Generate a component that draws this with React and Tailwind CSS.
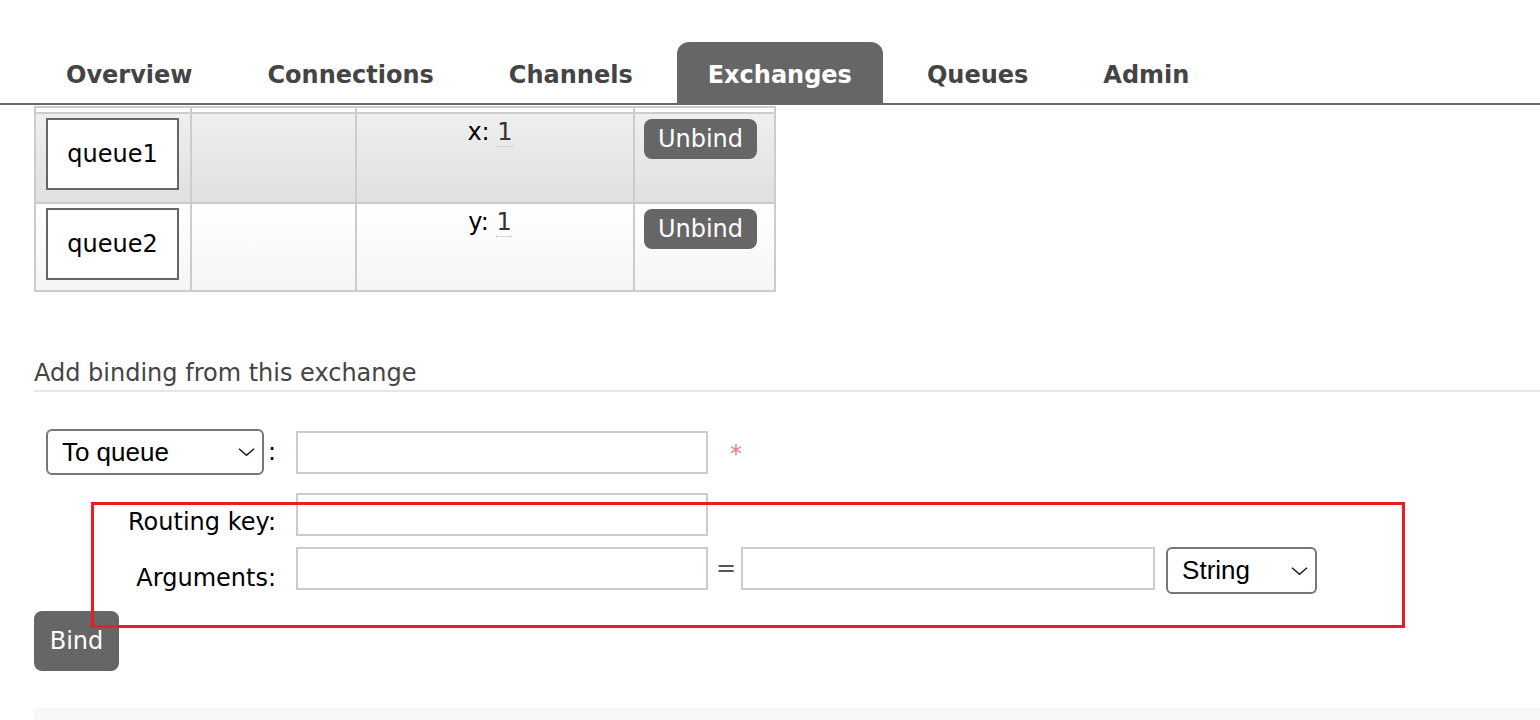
import { useState } from "react";

const tabs = ["Overview", "Connections", "Channels", "Exchanges", "Queues", "Admin"];

const bindings = [
  { queue: "queue1", key: "x", value: "1", bg: "bg-linear-to-b from-[#efefef] to-[#e0e0e0]", h: "h-[90px]" },
  { queue: "queue2", key: "y", value: "1", bg: "bg-linear-to-b from-white to-[#f5f5f5]", h: "h-[88px]" },
];

const Chevron = () => (
  <svg
    className="pointer-events-none absolute right-[9px] top-1/2 -translate-y-1/2"
    width="17"
    height="9"
    viewBox="0 0 17 9"
  >
    <path d="M1 1.2l7.5 6.6L16 1.2" fill="none" stroke="#1a1a1a" strokeWidth="1.5" />
  </svg>
);

const Select = ({ value, options, className }) => (
  <div className={`relative ${className}`}>
    <select
      defaultValue={value}
      className="h-full w-full appearance-none rounded-[6px] border-2 border-[#777] bg-white pl-[14px] font-['Liberation_Sans',Arial,sans-serif] text-[26px] text-black outline-none"
    >
      {options.map((o) => (
        <option key={o}>{o}</option>
      ))}
    </select>
    <Chevron />
  </div>
);

const Field = ({ className = "w-[412px]" }) => (
  <input type="text" className={`h-[43px] border-2 border-[#ccc] bg-white px-2 outline-none ${className}`} />
);

export default function App() {
  const [active] = useState("Exchanges");

  return (
    <div className="relative min-h-[720px] overflow-hidden bg-white pt-[42px] font-['DejaVu_Sans',Verdana,sans-serif] text-[24px] text-[#222]">
      {/* tab bar */}
      <div className="flex gap-[13px] border-b-2 border-[#666] pl-[35px]">
        {tabs.map((t) => (
          <div
            key={t}
            className={`flex h-[61px] items-center rounded-t-[12px] px-[31px] pt-[4px] font-bold ${
              t === active ? "bg-[#666] text-white" : "text-[#444]"
            }`}
          >
            {t}
          </div>
        ))}
      </div>

      {/* bindings table (header scrolled under the tabs) */}
      <div className="ml-[34px] mt-px w-[742px] border-l-2 border-t-2 border-[#ccc]">
        <div className="flex">
          <div className="h-[6px] w-[156px] border-b-2 border-r-2 border-[#ccc]" />
          <div className="h-[6px] w-[165px] border-b-2 border-r-2 border-[#ccc]" />
          <div className="h-[6px] w-[278px] border-b-2 border-r-2 border-[#ccc]" />
          <div className="h-[6px] w-[141px] border-b-2 border-r-2 border-[#ccc]" />
        </div>
        {bindings.map((b) => (
          <div key={b.queue} className={`flex ${b.bg}`}>
            <div className={`${b.h} w-[156px] border-b-2 border-r-2 border-[#ccc] pl-[10px] pt-[4px]`}>
              <div className="flex h-[72px] w-[133px] items-center justify-center border-2 border-[#666] bg-white text-black">
                {b.queue}
              </div>
            </div>
            <div className={`${b.h} w-[165px] border-b-2 border-r-2 border-[#ccc]`} />
            <div className={`${b.h} w-[278px] border-b-2 border-r-2 border-[#ccc] pt-[4px] pr-[10px] text-center leading-[28px] text-black`}>
              {b.key}:{" "}
              <span className="border-b border-dotted border-[#bbb] text-[#333]">{b.value}</span>
            </div>
            <div className={`${b.h} w-[141px] border-b-2 border-r-2 border-[#ccc] pl-[9px] pt-[5px]`}>
              <button className="flex h-[40px] w-[113px] items-center justify-center rounded-[8px] bg-[#666] text-white">
                Unbind
              </button>
            </div>
          </div>
        ))}
      </div>

      {/* add binding */}
      <div className="ml-[34px] mt-[67px] border-b-2 border-[#e6e6e6] pb-[3px] leading-[28px] text-[#444]">
        Add binding from this exchange
      </div>

      <div className="ml-[34px] mt-[37px] grid grid-cols-[242px_1fr] gap-x-[20px]">
        <div className="flex items-center justify-end">
          <Select value="To queue" options={["To queue", "To exchange"]} className="h-[46px] w-[218px]" />
          <span className="ml-[4px] text-black">:</span>
        </div>
        <div className="flex items-center">
          <Field />
          <span className="ml-[22px] pt-[4px] text-[#f08080]">*</span>
        </div>

        <div className="mt-[18px] pt-[15px] text-right leading-[28px] text-black">Routing key:</div>
        <div className="mt-[18px] flex">
          <Field />
        </div>

        <div className="mt-[11px] pt-[17px] text-right leading-[28px] text-black">Arguments:</div>
        <div className="mt-[11px] flex items-start">
          <Field />
          <span className="ml-[8px] mt-[7px] leading-[28px] text-[#555]">=</span>
          <Field className="ml-[5px] w-[414px]" />
          <Select value="String" options={["String", "Number", "Boolean", "List"]} className="ml-[11px] h-[47px] w-[151px]" />
        </div>
      </div>

      <button className="ml-[34px] mt-[17px] flex h-[60px] w-[85px] items-center justify-center rounded-[8px] bg-[#666] text-white">
        Bind
      </button>

      <div className="ml-[34px] mt-[37px] h-[40px] bg-[#f7f7f7]" />

      {/* red annotation */}
      <div className="pointer-events-none absolute left-[91px] top-[502px] h-[126px] w-[1314px] border-[3px] border-[#ec1c24]" />
    </div>
  );
}
